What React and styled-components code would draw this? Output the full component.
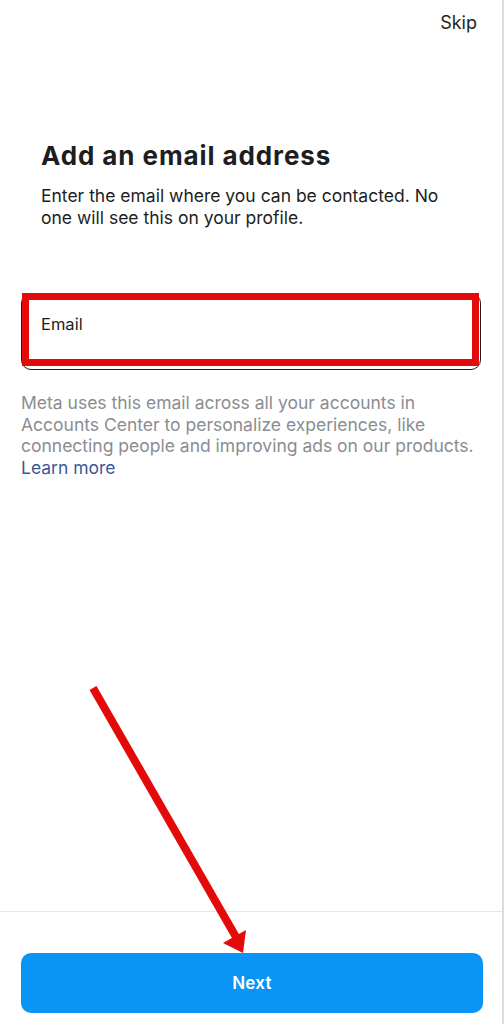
import React from "react";
import styled, { createGlobalStyle } from "styled-components";

const GlobalStyle = createGlobalStyle`
  html, body {
    margin: 0;
    padding: 0;
    background: #ffffff;
  }
  body {
    font-family: Inter, "Noto Sans", Roboto, sans-serif;
    color: #1c1e21;
  }
`;

const Screen = styled.div`
  position: relative;
  display: flex;
  flex-direction: column;
  width: 504px;
  height: 1024px;
  box-sizing: border-box;
  border-right: 2px solid #dcdcdc;
  background: #fff;
  overflow: hidden;
`;

const TopBar = styled.header`
  display: flex;
  justify-content: flex-end;
  padding: 12px 25px 0 0;
`;

const SkipButton = styled.button`
  border: 0;
  background: none;
  padding: 0;
  font: 400 18px/22px Inter, "Noto Sans", sans-serif;
  color: #1c1e21;
`;

const Content = styled.main`
  display: flex;
  flex-direction: column;
  padding: 0 21px;
`;

const Intro = styled.section`
  padding: 106px 20px 0;
`;

const Title = styled.h1`
  margin: 0;
  font-size: 26px;
  line-height: 32px;
  font-weight: 700;
  letter-spacing: 0.9px;
  color: #1c1e21;
`;

const Lead = styled.p`
  margin: 13px 0 0;
  font-size: 17.5px;
  line-height: 22px;
  color: #1c1e21;
`;

const Field = styled.div`
  position: relative;
  margin-top: 64px;
  height: 77px;
  box-sizing: border-box;
  border: 1.5px solid #1c1e21;
  border-radius: 10px;
  padding: 20px 19px 0;
`;

const FieldLabel = styled.label`
  display: block;
  font-size: 16.5px;
  line-height: 20px;
  color: #1c1e21;
`;

const Highlight = styled.span`
  position: absolute;
  left: 0px;
  top: -1.5px;
  right: 1px;
  bottom: 3px;
  border: 7.5px solid #e50a0a;
  pointer-events: none;
`;

const Note = styled.p`
  margin: 22px 0 0;
  font-size: 17.5px;
  line-height: 21.5px;
  color: #8a8d91;
`;

const LearnMore = styled.a`
  color: #3b5998;
  text-decoration: none;
`;

const Spacer = styled.div`
  flex: 1;
`;

const Footer = styled.footer`
  border-top: 1px solid #e6e6e6;
  padding: 41px 19px 11px 21px;
`;

const NextButton = styled.button`
  display: block;
  width: 100%;
  height: 60px;
  border: 0;
  border-radius: 10px;
  background: #0a95f6;
  color: #fff;
  font: 600 17px/20px Inter, "Noto Sans", sans-serif;
  letter-spacing: 0.3px;
`;

const Pointer = styled.svg`
  position: absolute;
  left: 0;
  top: 0;
  pointer-events: none;
`;

export default function App() {
  return (
    <>
      <GlobalStyle />
      <Screen>
        <TopBar>
          <SkipButton>Skip</SkipButton>
        </TopBar>
        <Content>
          <Intro>
            <Title>Add an email address</Title>
            <Lead>
              Enter the email where you can be contacted. No one will see this
              on your profile.
            </Lead>
          </Intro>
          <Field>
            <FieldLabel>Email</FieldLabel>
            <Highlight />
          </Field>
          <Note>
            Meta uses this email across all your accounts in Accounts Center to
            personalize experiences, like connecting people and improving ads on
            our products. <LearnMore href="#">Learn more</LearnMore>
          </Note>
        </Content>
        <Spacer />
        <Footer>
          <NextButton>Next</NextButton>
        </Footer>
        <Pointer width="504" height="1024" viewBox="0 0 504 1024">
          <line
            x1="93"
            y1="688"
            x2="236"
            y2="937"
            stroke="#e50a0a"
            strokeWidth="8"
          />
          <polygon points="243,953 223,943 246,930" fill="#e50a0a" />
        </Pointer>
      </Screen>
    </>
  );
}
